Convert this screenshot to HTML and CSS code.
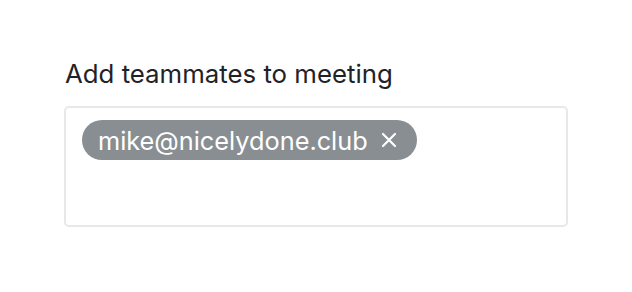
FILE: index.html
```html
<!DOCTYPE html>
<html>
    <head>
        <title>Add teammates</title>
        <link rel="stylesheet" href="styles.css">
    </head>
    <body>
        <div class="field">
            <label class="fieldLabel" for="teammates">Add teammates to meeting</label>
            <div class="tagBox">
                <span class="tag">
                    <span class="tagText">mike@nicelydone.club</span>
                    <button class="tagRemove" type="button" aria-label="Remove">
                        <svg width="16" height="16" viewBox="0 0 16 16">
                            <path d="M2 2 L14 14 M14 2 L2 14" stroke="#fff" stroke-width="2.2" stroke-linecap="round"/>
                        </svg>
                    </button>
                </span>
                <input id="teammates" class="tagInput" type="text"/>
            </div>
        </div>
    </body>
</html>
```

FILE: styles.css
```css
html, body {
    margin: 0;
    background-color: #ffffff;
}

body {
    font-family: Inter, "Noto Sans", sans-serif;
    color: #1f2328;
}

.field {
    padding: 58px 0 0 64px;
    width: 504px;
}

.fieldLabel {
    display: block;
    font-size: 25.8px;
    line-height: 32px;
    margin-bottom: 16px;
    padding-left: 1px;
}

.tagBox {
    display: flex;
    flex-wrap: wrap;
    align-items: flex-start;
    gap: 8px;
    box-sizing: border-box;
    min-height: 121px;
    padding: 12px 16px;
    border: 2px solid #e6e8eb;
    border-radius: 5px;
}

.tag {
    display: inline-flex;
    align-items: center;
    gap: 13px;
    height: 40px;
    padding: 0 20px 0 16px;
    border-radius: 20px;
    background-color: #888e92;
    color: #ffffff;
    font-size: 25.3px;
}

.tagRemove {
    display: flex;
    padding: 0;
    border: 0;
    background: none;
    cursor: pointer;
}

.tagInput {
    flex: 1;
    min-width: 60px;
    height: 40px;
    border: 0;
    outline: none;
    font: inherit;
    font-size: 20px;
    background: transparent;
}
```
